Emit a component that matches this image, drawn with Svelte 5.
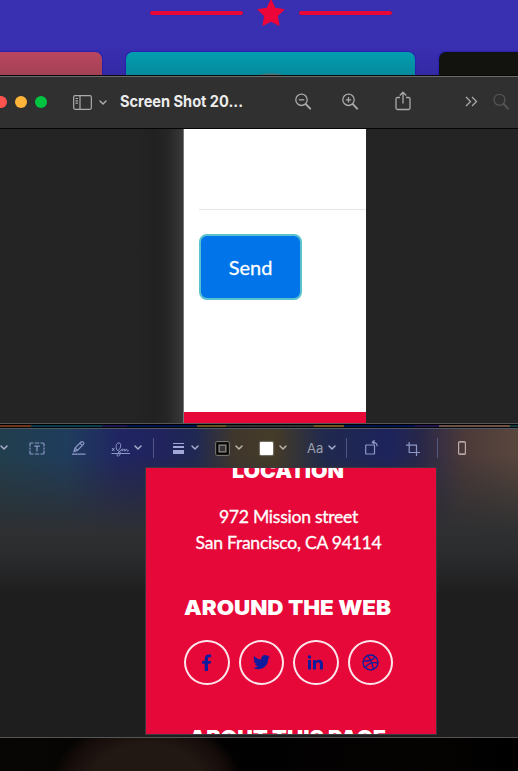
<script>
  const socials = [
    { name: 'Facebook', d: 'M4.2 17V9.8H1.6V7h2.6V4.8C4.2 1.9 5.9.5 8.4.5c1.1 0 2 .1 2.3.1v2.6H9.1c-1.3 0-1.6.7-1.6 1.6V7h3l-.5 2.8H7.5V17z', box: '-2.5 0 17 17' },
    { name: 'Twitter', d: 'M15.2 4.8v.4c0 4.6-3.5 10-9.9 10-2 0-3.8-.6-5.3-1.6 1.8.2 3.7-.3 5.2-1.5-1.5 0-2.8-1-3.3-2.4.5.1 1 .1 1.6-.1C1.900 9.300.7 7.900.7 6.200c.5.3 1 .4 1.600.4C.7 5.500.2 3.400 1.200 1.900 2.900 4 5.500 5.400 8.400 5.500 7.900 3.200 9.600 1 11.800 1c1 0 1.900.4 2.500 1.100.8-.2 1.500-.4 2.200-.8-.3.8-.8 1.500-1.500 1.900.7-.1 1.400-.3 2-.5-.5.8-1.100 1.500-1.800 2.100z', box: '0 0 17 17' },
    { name: 'LinkedIn', d: 'M1 6h3v9.500H1zM2.500 1.200a1.750 1.750 0 1 1 0 3.500 1.750 1.750 0 0 1 0-3.500M6 6h2.900v1.300C9.600 6.200 10.600 5.700 12 5.700c2.900 0 3.900 1.700 3.900 4.500v5.300h-3v-4.800c0-1.500-.4-2.400-1.800-2.400-1.500 0-2.100 1-2.100 2.500v4.700H6z', box: '0 0 17 17' },
    { name: 'Dribbble', d: '', box: '0 0 17 17' }
  ];
</script>

{#snippet chevron()}
  <svg class="chevron" viewBox="0 0 8 6"><path d="M1 1l3 3 3-3" /></svg>
{/snippet}

<div class="screen">
  <header class="page">
    <div class="divider">
      <span class="bar"></span>
      <svg class="star" viewBox="0 0 28 28"><path d="M14 1l3.900 8.300 8.900 1.200-6.500 6.400 1.600 9.300L14 21.900l-7.900 4.300 1.600-9.300-6.500-6.400 8.900-1.200z" /></svg>
      <span class="bar"></span>
    </div>
    <div class="cards">
      <div class="card rose"></div>
      <div class="card teal"></div>
      <div class="card dark"></div>
    </div>
  </header>

  <div class="titlebar">
    <i class="dot red"></i><i class="dot amber"></i><i class="dot green"></i>
    <svg class="sidebar" viewBox="0 0 19 15"><rect x=".65" y=".65" width="17.700" height="13.700" rx="1.500" /><path d="M7 1v13M2.500 3.500h2.500M2.500 5.800h2.500M2.500 8.100h2.500" /></svg>
    {@render chevron()}
    <svg class="title" viewBox="0 0 124 20"><text x="0" y="15" textLength="123" lengthAdjust="spacingAndGlyphs">Screen Shot 20...</text></svg>
    <svg class="tool zoomout" viewBox="0 0 16 17"><circle cx="6.500" cy="6.800" r="5.700" /><path d="M3.800 6.800h5.400" /><path class="thick" d="M10.800 11.100l4.400 4.500" /></svg>
    <svg class="tool zoomin" viewBox="0 0 16 17"><circle cx="6.500" cy="6.800" r="5.700" /><path d="M3.800 6.800h5.400M6.500 4.100v5.400" /><path class="thick" d="M10.800 11.100l4.400 4.500" /></svg>
    <svg class="tool share" viewBox="0 0 16 20"><path d="M5 6.500H2.500Q1 6.500 1 8v9q0 1.500 1.500 1.500h11Q15 18.500 15 17V8q0-1.500-1.500-1.500H11M8 12.500V1.500M4.800 4.500L8 1.300l3.200 3.200" /></svg>
    <svg class="tool more" viewBox="0 0 13 11"><path d="M1 1l4.500 4.500L1 10M7 1l4.500 4.500L7 10" /></svg>
    <svg class="tool find" viewBox="0 0 16 17"><circle cx="6.500" cy="6.800" r="5.500" /><path class="thick" d="M10.500 10.800l4.500 4.800" /></svg>
  </div>

  <main class="canvas">
    <div class="form">
      <div class="rule"></div>
      <button>Send</button>
      <div class="redband"></div>
    </div>
  </main>

  <div class="strip"></div>

  <section class="markup">
    <div class="toolbar">
      {@render chevron()}
      <svg class="textbox" viewBox="0 0 16 13"><path d="M1 4.500V2Q1 1 2 1h2.500M5.800 1h4.400M11.500 1H14q1 0 1 1v2.500M15 5.500v2M15 8.500V11q0 1-1 1h-2.500M10.200 12H5.800M4.500 12H2q-1 0-1-1V8.500M1 7.500v-2M5.200 4.200h5.600M8 4v5.500" /></svg>
      <svg class="pencil" viewBox="0 0 14 14"><path d="M0 13.200h13.500M2 10.500l1-3.500 6-6q1-1 2.300.1 1.100 1.200.1 2.300l-6 6zM8 2.200l2.300 2.300M3 7l2.400 2.400" /></svg>
      <svg class="sign" viewBox="0 0 20 15"><path d="M.5 11.500h18.500M1 6l2.500 3M3.500 6L1 9M7 9C4.500 7 4.500 2 7 1c3-1 3.500 3.500 1.500 6-1 1.200-2 2-1 2.100 1.700 0 2.300 1.900 1.200 4-1 1.500-3 1.300-2.500-.5.500-1.800 3.500-4 5.300-5.600-1 2-.5 2.500.4 1.500l1.400-1.600c1 0-.3 3 .7 2.200l1.500-2c1 0 .1 2.300 1 2.100.6-.2.900-.8 1.500-.8" /></svg>
      {@render chevron()}
      <i class="sep s1"></i>
      <svg class="lines" viewBox="0 0 11 11"><path d="M0 0h11v1H0zM0 3h11v2H0zM0 7h11v4H0z" /></svg>
      {@render chevron()}
      <svg class="border" viewBox="0 0 15 15"><rect x=".7" y=".7" width="13.600" height="13.600" rx="2" stroke="#77776c" /><rect x="2.300" y="2.300" width="10.400" height="10.400" stroke="#050505" stroke-width="2" /><rect x="4.200" y="4.200" width="6.600" height="6.600" stroke="#88887e" /></svg>
      {@render chevron()}
      <i class="fill"></i>
      {@render chevron()}
      <span class="aa">Aa</span>
      {@render chevron()}
      <i class="sep s2"></i>
      <svg class="rotate" viewBox="0 0 14 15"><rect x=".7" y="5" width="8.800" height="9" rx=".6" /><path d="M7.500 2.200c3 0 4.500 1.200 4.700 4M9.500.2l-2.200 2 2.200 2" /></svg>
      <svg class="crop" viewBox="0 0 14 14"><path d="M3.200 0v10.500H14M0 3.200h10.500V14" /></svg>
      <i class="sep s3"></i>
      <svg class="phone" viewBox="0 0 8 14"><rect x=".6" y=".6" width="6.800" height="12.800" rx="1" /><path d="M1.500 2.300L2.300 1.200h3.400l.8 1.100M1.500 11.700l.8 1.100h3.400l.8-1.100" stroke-width=".8" /></svg>
    </div>
    <div class="footer">
      <svg class="head location" viewBox="0 0 112 12"><text x="0" y="10" textLength="112" lengthAdjust="spacingAndGlyphs">LOCATION</text></svg>
      <p>972 Mission street<br />San Francisco, CA 94114</p>
      <svg class="head around" viewBox="0 0 206 20"><text x="-1" y="18" textLength="207" lengthAdjust="spacingAndGlyphs">AROUND THE WEB</text></svg>
      <div class="socials">
        {#each socials as item}
          <span class="social" aria-label={item.name}>
            {#if item.d}
              <svg viewBox={item.box}><path d={item.d} /></svg>
            {:else}
              <svg class="ball" viewBox={item.box}><circle cx="8.500" cy="8.500" r="7.500" /><path d="M5.500 1.700c3 3.500 4.900 7.500 5.900 13.500M1.200 7.200c5 .1 9-.9 12-4M3.200 13.800c2.800-4.600 6.600-6.100 12.700-4.800" /></svg>
            {/if}
          </span>
        {/each}
      </div>
      <svg class="head about" viewBox="0 0 196 6"><text x="-1" y="17" textLength="197" lengthAdjust="spacingAndGlyphs">ABOUT THIS PAGE</text></svg>
    </div>
  </section>
  <div class="photo"></div>
</div>

<style>
  :global(body) { margin: 0; background: #000; }
  * { box-sizing: border-box; }
  .screen { width: 518px; height: 771px; overflow: hidden; display: flex; flex-direction: column; font-family: Inter, sans-serif; }
  .screen > * { flex-shrink: 0; }
  svg { display: block; flex: none; fill: none; stroke-width: 1.2; overflow: visible; }
  i { display: block; flex: none; }

  .page { height: 75px; background: linear-gradient(#392fb1 60%, #3429a4); overflow: hidden; }
  .divider { height: 52px; display: flex; justify-content: center; gap: 14px; padding-left: 24px; }
  .bar { width: 93px; height: 4px; margin-top: 11px; border-radius: 2px; background: #e80837; box-shadow: 0 0 1px #1a17a6; }
  .star { width: 28px; height: 28px; margin-top: -1px; fill: #ec0539; stroke: #ec0539; stroke-linejoin: round; }
  .cards { display: flex; gap: 24px; }
  .card { flex: none; height: 30px; border-radius: 7px 7px 0 0; box-shadow: 0 0 1px 1px #2821b0; }
  .rose { width: 102px; border-radius: 0 7px 0 0; background: linear-gradient(#b9465e, #a24055 24px); }
  .teal { width: 289px; background: radial-gradient(ellipse 13px 2px at 145px 23px, #567276 60%, transparent), linear-gradient(#049db0, #05899b 24px); }
  .dark { width: 90px; background: #12120f; }

  .titlebar { height: 54px; background: #303030; border-top: 1px solid #080808; border-bottom: 1px solid #050505; box-shadow: inset 0 1px #6b6b6b; display: flex; align-items: center; stroke: #aaa; overflow: hidden; }
  .dot { width: 12px; height: 12px; border-radius: 50%; margin-right: 8px; }
  .red { background: #ff5350; margin-left: -5px; }
  .amber { background: #ffb43a; }
  .green { background: #00c340; margin-right: 26px; }
  .sidebar { width: 19px; height: 15px; }
  .chevron { width: 8px; height: 6px; stroke: #aaa; stroke-width: 1.5; stroke-linecap: round; stroke-linejoin: round; }
  .titlebar .chevron { margin: 2px 0 0 7px; }
  .title { width: 124px; height: 20px; margin-left: 13px; fill: #ececec; stroke: none; font-weight: 700; font-size: 15.3px; }
  .tool { width: 16px; height: 17px; margin-top: -1px; stroke-width: 1.3; }
  .thick { stroke-width: 2; stroke-linecap: round; }
  .zoomout { margin-left: 51px; }
  .zoomin { margin-left: 31px; }
  .share { width: 16px; height: 20px; margin: -2px 0 0 37px; stroke-linejoin: round; }
  .more { width: 13px; height: 11px; margin-left: 54px; }
  .find { margin-left: 15px; stroke: #555; }

  .canvas { height: 294px; padding-left: 184px; background: linear-gradient(90deg, #242424 0 135px, #212121 155px, #262626 168px, #383838 183px, #777 183px 184px, #242424 184px); }
  .form { width: 182px; height: 294px; background: #fff; padding-top: 80px; display: flex; flex-direction: column; }
  .rule { height: 1px; margin-left: 15px; background: #e5e5e5; }
  button { width: 103px; height: 66px; margin: 24px 0 0 15px; border: 2px solid #58c2ce; border-radius: 8px; background: #0074e8; color: #fff; font: 20px Lato, sans-serif; -webkit-text-stroke: .3px #fff; padding: 0 0 1px; }
  .redband { margin-top: auto; height: 11px; background: #e60838; }

  .strip { height: 5px; border-top: 1px solid #555; border-bottom: 1px solid #090909; background: linear-gradient(#000 1px, transparent 1px), linear-gradient(90deg, #70361b 0 31px, #093d4d 31px 102px, #1c164e 102px 127px, #03134b 127px 197px, #675022 197px 226px, #333 226px 314px, #745423 314px 344px, #03134b 344px 415px, #241450 415px 439px, #6d5046 439px 510px, #123c42 510px); }
  .markup { height: 310px; border-top: 1px solid #4f5765; border-bottom: 1px solid #555; display: flex; flex-direction: column; background: linear-gradient(transparent 25px, rgba(45,47,49,.6) 70px, #2e2f31 105px, #2b2c2e 125px, #1e1e1e 165px), linear-gradient(90deg, #213e4d 0, #1f3d5c 65px, #202562 120px, #20235d 160px, #1f2853 195px, #40372c 235px, #443b28 275px, #20294e 325px, #1d235c 390px, #282749 420px, #4c3a39 465px, #59463d 518px); }
  .toolbar { height: 38px; flex: none; display: flex; align-items: center; stroke: #8d98c7; }
  .toolbar .chevron { margin-left: 4px; stroke: #a6adcc; }
  .toolbar .chevron:first-child { margin-left: 0; }
  .textbox { width: 16px; height: 13px; margin-left: 21px; }
  .pencil { width: 14px; height: 14px; margin: -1px 0 0 27px; }
  .sign { width: 20px; height: 15px; margin: 2px 0 0 25px; stroke-width: 1; }
  .toolbar .sign + .chevron { margin-left: 3px; }
  .sep { width: 1px; height: 20px; background: #515683; }
  .s1 { margin-left: 11px; }
  .lines { width: 11px; height: 11px; margin-left: 19px; fill: #a1a8d7; stroke: none; }
  .toolbar .lines + .chevron { margin-left: 7px; }
  .border { width: 15px; height: 15px; margin-left: 16px; }
  .toolbar .border + .chevron { margin-left: 5px; stroke: #b9b5aa; }
  .fill { width: 13px; height: 13px; margin-left: 17px; background: #fff; border-radius: 1px; box-shadow: 0 0 1px 1px #78756b; }
  .toolbar .fill + .chevron { margin-left: 6px; stroke: #b9b5aa; }
  .aa { width: 17px; margin-left: 20px; color: #9aa0af; font-size: 13px; line-height: 18px; }
  .s2 { margin-left: 10px; }
  .rotate { width: 14px; height: 15px; margin: -2px 0 0 18px; }
  .crop { width: 14px; height: 14px; margin: 2px 0 0 27px; }
  .s3 { margin-left: 17px; }
  .phone { width: 8px; height: 14px; margin-left: 20px; stroke: #b9a9a8; }

  .footer { width: 290px; height: 266px; margin: 1px 0 0 146px; background: #e60838; overflow: hidden; box-shadow: 0 0 0 1px #3b3940; display: flex; flex-direction: column; align-items: center; padding-right: 6px; color: #fff; }
  .head { fill: #fff; stroke: none; font-family: Inter, sans-serif; font-size: 20px; font-weight: 900; }
  .location { width: 112px; height: 12px; }
  p { margin: 24px 0 0; padding-left: 1px; font: 17.6px/26px Lato, sans-serif; letter-spacing: -.27px; -webkit-text-stroke: .3px #fff; text-align: center; white-space: nowrap; }
  .around { width: 206px; height: 20px; margin-top: 41px; }
  .socials { display: flex; gap: 9px; margin-top: 23px; padding-left: 1px; }
  .social { width: 45.500px; height: 45px; border: 2px solid #fde5eb; border-radius: 50%; display: grid; place-items: center; }
  .social svg { width: 17px; height: 17px; fill: #101c9d; stroke: none; }
  .social .ball { fill: none; stroke: #101c9d; stroke-width: 1.3; }
  .about { width: 196px; height: 6px; margin-top: auto; }
  .photo { height: 33px; background: radial-gradient(ellipse 95px 70px at 147px 48px, #211713 60%, #160d0a 85%, transparent), linear-gradient(90deg, #080604, #020101 260px, #050302 430px, #000); }
</style>
